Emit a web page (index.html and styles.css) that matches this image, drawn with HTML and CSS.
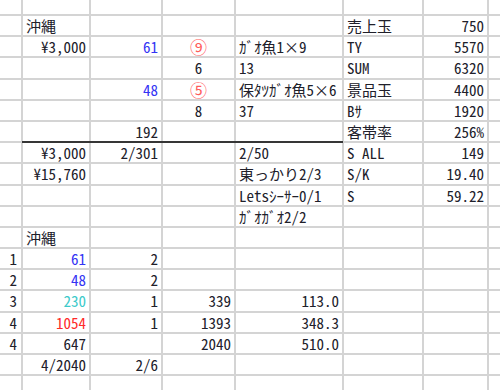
FILE: index.html
```html
<!DOCTYPE html>
<html lang="ja">
<head>
<meta charset="utf-8">
<link rel="stylesheet" href="styles.css">
</head>
<body>
<div class="sheet">
  <!-- row 0 -->
  <div class="cell"></div><div class="cell"></div><div class="cell"></div><div class="cell"></div><div class="cell"></div><div class="cell"></div><div class="cell"></div><div class="cell"></div>
  <!-- A -->
  <div class="cell"></div><div class="cell">沖縄</div><div class="cell"></div><div class="cell"></div><div class="cell"></div><div class="cell">売上玉</div><div class="cell r">750</div><div class="cell"></div>
  <!-- B -->
  <div class="cell"></div><div class="cell r">¥3,000</div><div class="cell r blue">61</div><div class="cell c circ">⑨</div><div class="cell">ｶﾞｵ魚1×9</div><div class="cell">TY</div><div class="cell r">5570</div><div class="cell"></div>
  <!-- C -->
  <div class="cell"></div><div class="cell"></div><div class="cell"></div><div class="cell c">6</div><div class="cell">13</div><div class="cell">SUM</div><div class="cell r">6320</div><div class="cell"></div>
  <!-- D -->
  <div class="cell"></div><div class="cell"></div><div class="cell r blue">48</div><div class="cell c circ">⑤</div><div class="cell">保ﾀﾂｶﾞｵ魚5×6</div><div class="cell">景品玉</div><div class="cell r">4400</div><div class="cell"></div>
  <!-- E -->
  <div class="cell"></div><div class="cell"></div><div class="cell"></div><div class="cell c">8</div><div class="cell">37</div><div class="cell">Bｻ</div><div class="cell r">1920</div><div class="cell"></div>
  <!-- F -->
  <div class="cell"></div><div class="cell"></div><div class="cell r">192</div><div class="cell"></div><div class="cell"></div><div class="cell">客帯率</div><div class="cell r">256%</div><div class="cell"></div>
  <!-- G -->
  <div class="cell"></div><div class="cell r total">¥3,000</div><div class="cell r total">2/301</div><div class="cell total"></div><div class="cell total">2/50</div><div class="cell">S ALL</div><div class="cell r">149</div><div class="cell"></div>
  <!-- H -->
  <div class="cell"></div><div class="cell r">¥15,760</div><div class="cell"></div><div class="cell"></div><div class="cell">東っかり2/3</div><div class="cell">S/K</div><div class="cell r">19.40</div><div class="cell"></div>
  <!-- I -->
  <div class="cell"></div><div class="cell"></div><div class="cell"></div><div class="cell"></div><div class="cell">Letsｼｰｻｰ0/1</div><div class="cell">S</div><div class="cell r">59.22</div><div class="cell"></div>
  <!-- J -->
  <div class="cell"></div><div class="cell"></div><div class="cell"></div><div class="cell"></div><div class="cell">ｶﾞｵｶﾞｵ2/2</div><div class="cell"></div><div class="cell"></div><div class="cell"></div>
  <!-- K -->
  <div class="cell"></div><div class="cell">沖縄</div><div class="cell"></div><div class="cell"></div><div class="cell"></div><div class="cell"></div><div class="cell"></div><div class="cell"></div>
  <!-- L -->
  <div class="cell num">1</div><div class="cell r blue">61</div><div class="cell r">2</div><div class="cell"></div><div class="cell"></div><div class="cell"></div><div class="cell"></div><div class="cell"></div>
  <!-- M -->
  <div class="cell num">2</div><div class="cell r blue">48</div><div class="cell r">2</div><div class="cell"></div><div class="cell"></div><div class="cell"></div><div class="cell"></div><div class="cell"></div>
  <!-- N -->
  <div class="cell num">3</div><div class="cell r cyan">230</div><div class="cell r">1</div><div class="cell r">339</div><div class="cell r">113.0</div><div class="cell"></div><div class="cell"></div><div class="cell"></div>
  <!-- O -->
  <div class="cell num">4</div><div class="cell r red">1054</div><div class="cell r">1</div><div class="cell r">1393</div><div class="cell r">348.3</div><div class="cell"></div><div class="cell"></div><div class="cell"></div>
  <!-- P -->
  <div class="cell num">4</div><div class="cell r">647</div><div class="cell"></div><div class="cell r">2040</div><div class="cell r">510.0</div><div class="cell"></div><div class="cell"></div><div class="cell"></div>
  <!-- Q -->
  <div class="cell"></div><div class="cell r">4/2040</div><div class="cell r">2/6</div><div class="cell"></div><div class="cell"></div><div class="cell"></div><div class="cell"></div><div class="cell"></div>
  <!-- R -->
  <div class="cell"></div><div class="cell"></div><div class="cell"></div><div class="cell"></div><div class="cell"></div><div class="cell"></div><div class="cell"></div><div class="cell"></div>
</div>
</body>
</html>
```

FILE: styles.css
```css
html, body {
  margin: 0;
  padding: 0;
  background: #ffffff;
}

.sheet {
  width: 500px;
  height: 390px;
  overflow: hidden;
  display: grid;
  grid-template-columns: 21px 66px 70px 71px 106px 78px 63px 1fr;
  grid-template-rows: 14px repeat(17, 19.2px) 1fr;
  gap: 2px;
  background: #d4d4d4;
  font-family: "Noto Sans Mono CJK JP", "Noto Sans CJK JP", sans-serif;
  font-feature-settings: "hwid" 1;
  font-size: 15px;
  color: #20202a;
}

.cell {
  background: #ffffff;
  line-height: 19.2px;
  padding: 0 3px;
  white-space: nowrap;
}

.r { text-align: right; }
.c { text-align: center; }
.num { text-align: right; padding-right: 4px; }

.blue { color: #3434f4; }
.cyan { color: #3ccaca; }
.red { color: #ff2a2a; }
.circ {
  color: #ff5a5a;
  font-size: 17px;
  line-height: 19.2px;
}

.total {
  position: relative;
}

.total::before {
  content: "";
  position: absolute;
  left: -1px;
  right: -1px;
  top: -2px;
  height: 2px;
  background: #363636;
}
```
